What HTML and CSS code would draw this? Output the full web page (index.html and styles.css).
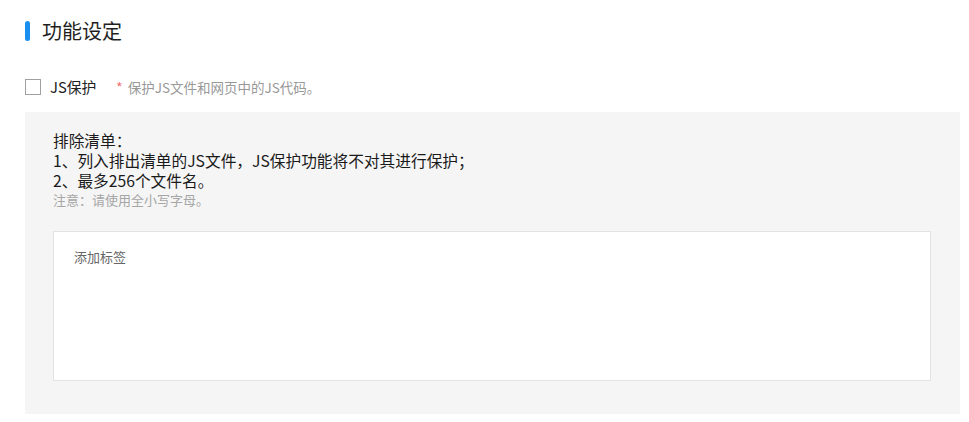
FILE: index.html
```html
<!DOCTYPE html>
<html lang="zh-CN">
<head>
<meta charset="utf-8">
<title>功能设定</title>
<link rel="stylesheet" href="styles.css">
</head>
<body>
<div class="page">
  <div class="section-title">
    <span class="title-bar"></span>
    <span class="title-text">功能设定</span>
  </div>
  <div class="option-row">
    <span class="checkbox"></span>
    <span class="option-label">JS保护</span>
    <span class="option-hint"><span class="req">*</span>保护JS文件和网页中的JS代码。</span>
  </div>
  <div class="panel">
    <div class="panel-text">
      <div>排除清单：</div>
      <div>1、列入排出清单的JS文件，JS保护功能将不对其进行保护；</div>
      <div>2、最多256个文件名。</div>
    </div>
    <div class="panel-note">注意：请使用全小写字母。</div>
    <div class="tag-box">
      <div class="tag-placeholder">添加标签</div>
    </div>
  </div>
</div>
</body>
</html>
```
FILE: styles.css
```css
html, body {
  margin: 0;
  padding: 0;
  background: #ffffff;
}
body {
  font-family: "Noto Sans CJK SC", "Microsoft YaHei", sans-serif;
  color: #222222;
}
.page {
  padding: 21px 9px 0 25px;
}
.section-title {
  display: flex;
  align-items: center;
  height: 20px;
}
.title-bar {
  width: 5px;
  height: 20px;
  border-radius: 3px;
  background: #1a8ff0;
  margin-right: 12px;
}
.title-text {
  font-size: 20px;
  line-height: 20px;
  color: #1f1f1f;
}
.option-row {
  display: flex;
  align-items: center;
  height: 20px;
  margin-top: 36px;
}
.checkbox {
  width: 14px;
  height: 14px;
  border: 1px solid #a0a0a0;
  background: #fff;
}
.option-label {
  margin-left: 9px;
  font-size: 14.8px;
  line-height: 20px;
  color: #222;
}
.option-hint {
  margin-left: 20px;
  font-size: 13.5px;
  line-height: 20px;
  color: #999999;
}
.req {
  color: #f56c6c;
  margin-right: 5px;
}
.panel {
  margin-top: 15px;
  background: #f5f5f5;
  padding: 19px 29px 33px 28px;
}
.panel-text {
  font-size: 15.7px;
  line-height: 20px;
  color: #1a1a1a;
}
.panel-note {
  font-size: 13px;
  line-height: 18px;
  color: #a6a6a6;
}
.tag-box {
  margin-top: 22px;
  background: #ffffff;
  border: 1px solid #e3e3e3;
  padding: 16px 20px 0 20px;
  box-sizing: border-box;
  height: 150px;
}
.tag-placeholder {
  font-size: 13px;
  line-height: 18px;
  color: #666666;
}
```
